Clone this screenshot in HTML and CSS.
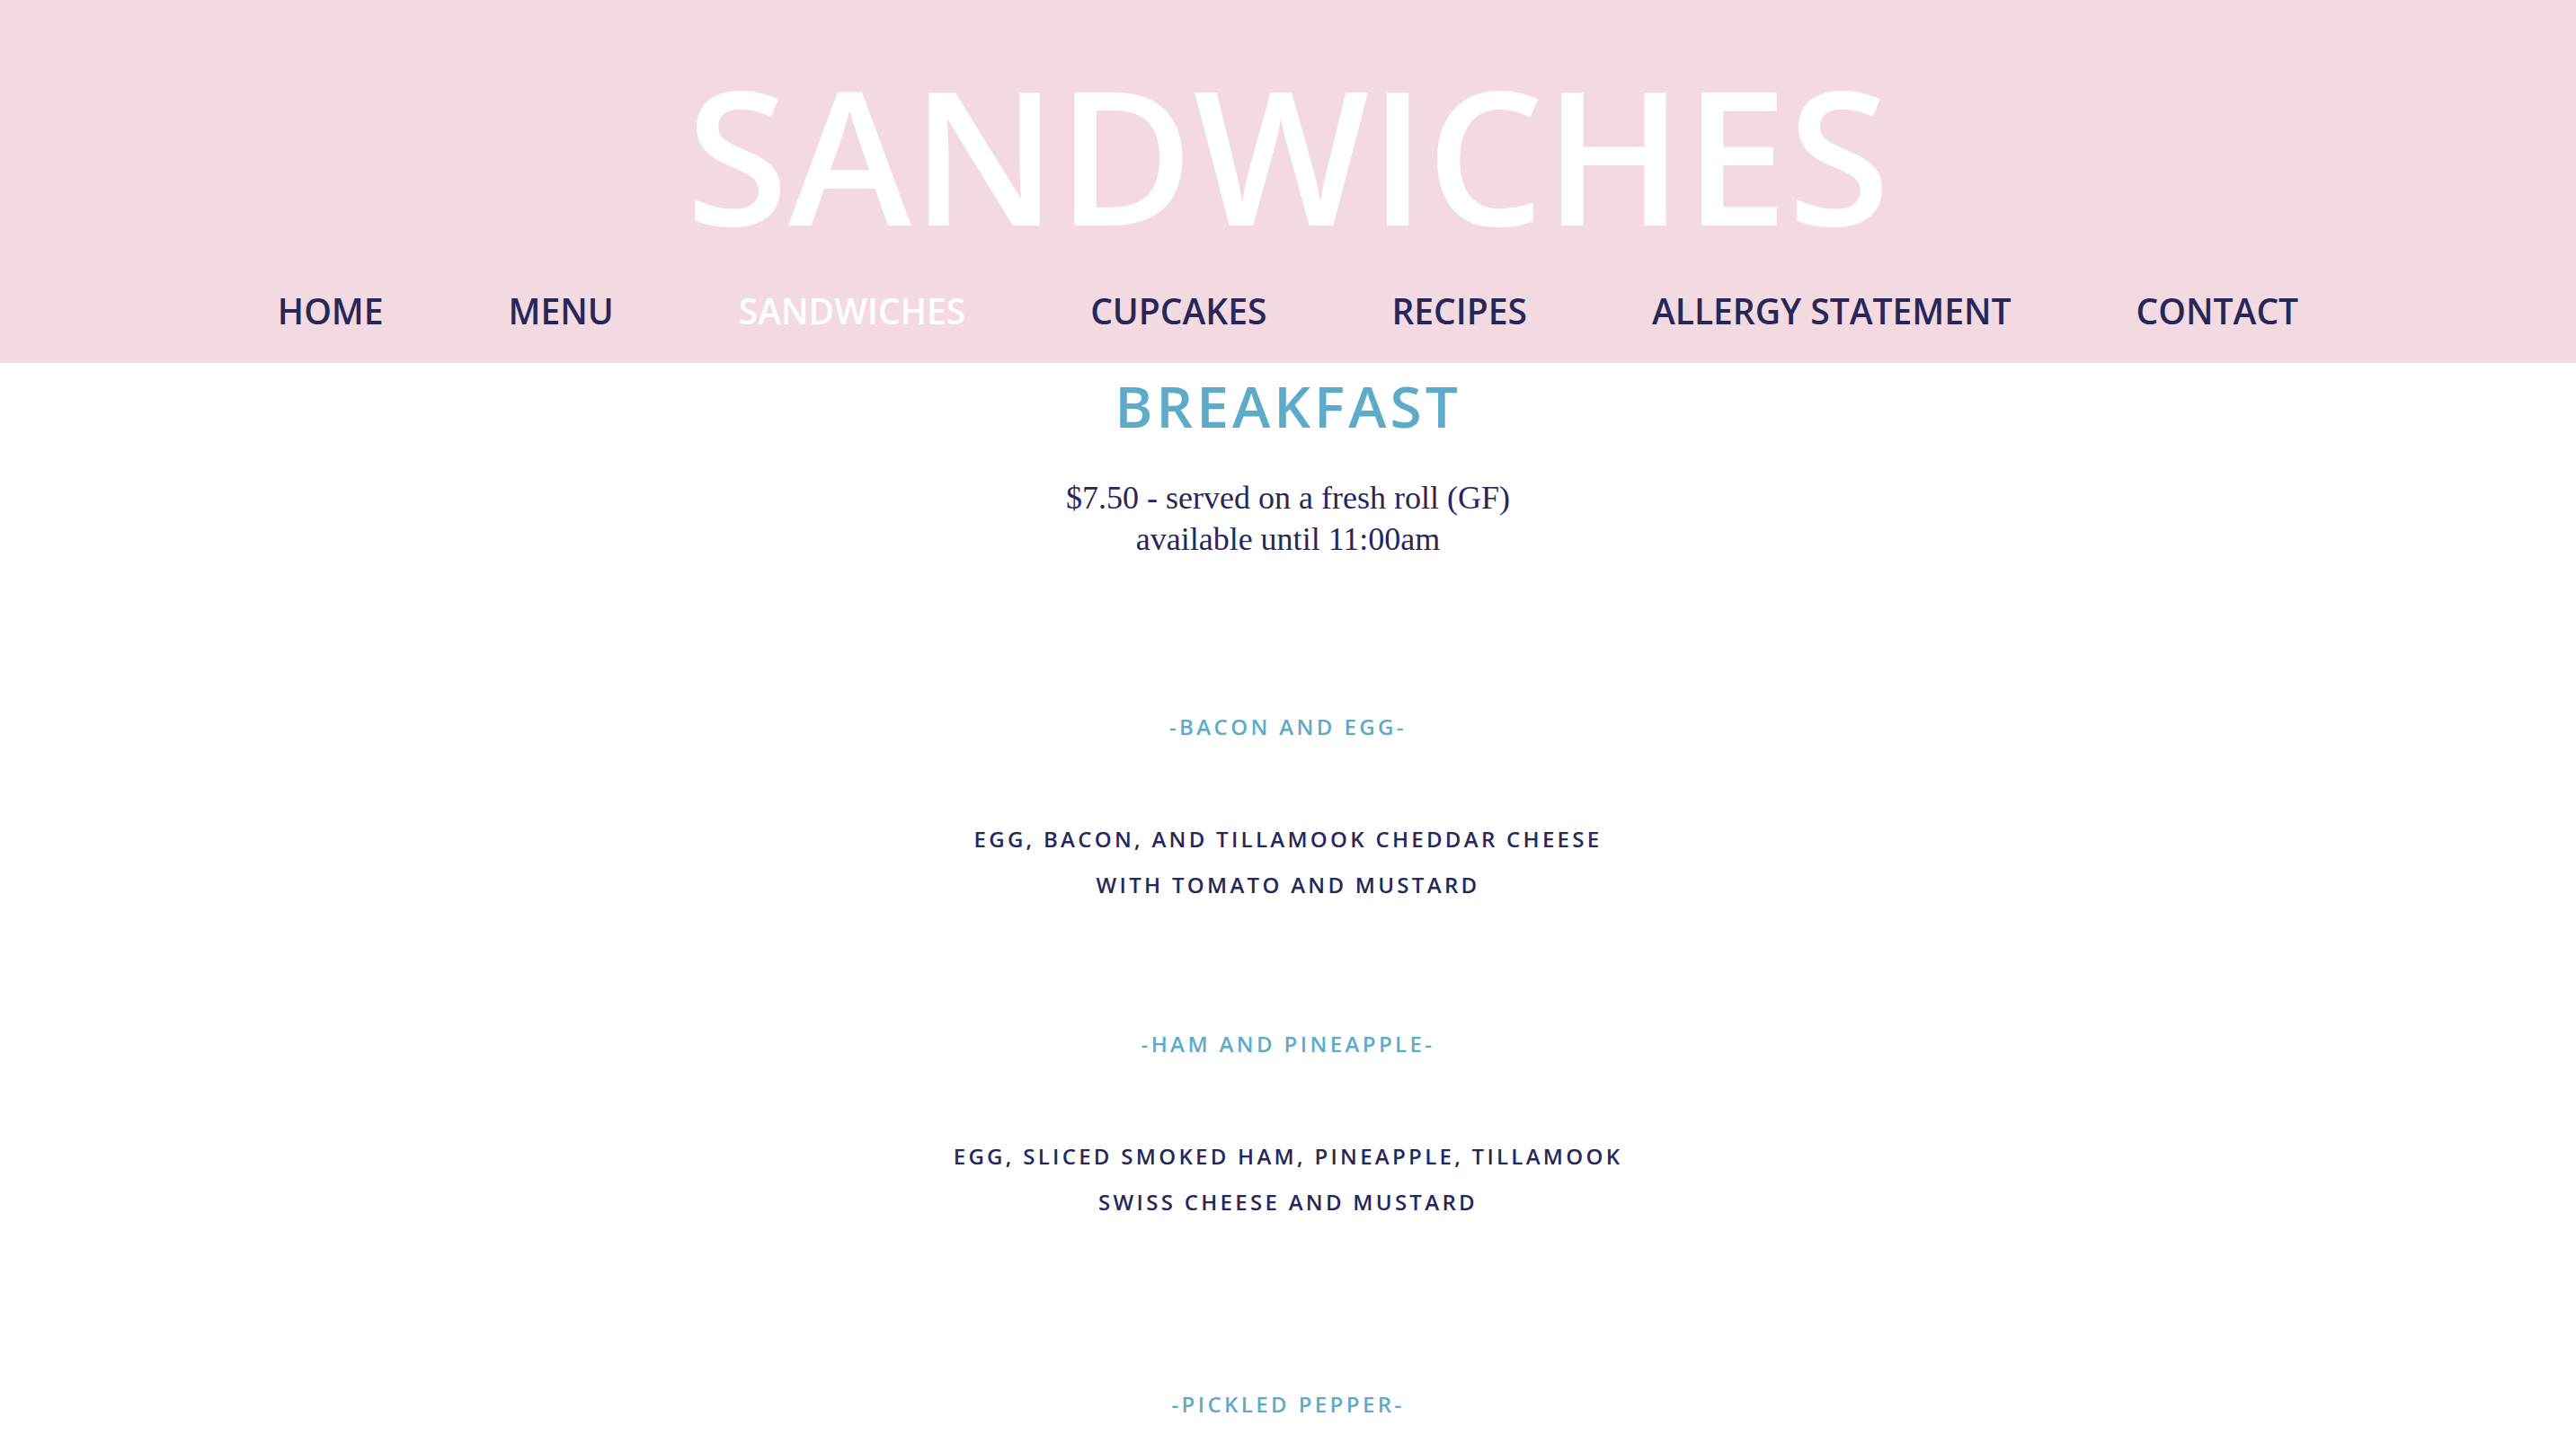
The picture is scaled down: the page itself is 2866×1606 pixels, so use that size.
FILE: index.html
```html
<!DOCTYPE html>
<html lang="en">
<head>
<meta charset="utf-8">
<title>Sandwiches</title>
<link rel="stylesheet" href="styles.css">
</head>
<body>
<header class="site-header">
  <h1 class="site-title">SANDWICHES</h1>
  <nav class="main-nav">
    <a class="nav-link" href="#">HOME</a>
    <a class="nav-link" href="#">MENU</a>
    <a class="nav-link nav-link--active" href="#">SANDWICHES</a>
    <a class="nav-link" href="#">CUPCAKES</a>
    <a class="nav-link" href="#">RECIPES</a>
    <a class="nav-link" href="#">ALLERGY STATEMENT</a>
    <a class="nav-link" href="#">CONTACT</a>
  </nav>
</header>
<main class="content">
  <h2 class="section-title">BREAKFAST</h2>
  <p class="section-note">$7.50 - served on a fresh roll (GF)<br>available until 11:00am</p>

  <section class="item">
    <h3 class="item-name">-BACON AND EGG-</h3>
    <p class="item-desc">EGG, BACON, AND TILLAMOOK CHEDDAR CHEESE<br>WITH TOMATO AND MUSTARD</p>
  </section>

  <section class="item">
    <h3 class="item-name">-HAM AND PINEAPPLE-</h3>
    <p class="item-desc">EGG, SLICED SMOKED HAM, PINEAPPLE, TILLAMOOK<br>SWISS CHEESE AND MUSTARD</p>
  </section>

  <section class="item item--spaced">
    <h3 class="item-name">-PICKLED PEPPER-</h3>
  </section>
</main>
</body>
</html>
```
FILE: styles.css
```css
html, body {
  margin: 0;
  padding: 0;
  background: #ffffff;
}

body {
  font-family: "Open Sans", "Liberation Sans", sans-serif;
  color: #27275a;
}

.site-header {
  background: #f3dae0;
  height: 404px;
  box-sizing: border-box;
  padding-top: 68px;
  display: flex;
  flex-direction: column;
  align-items: center;
}

.site-title {
  margin: 0;
  font-size: 207px;
  line-height: 207px;
  font-weight: 600;
  color: #ffffff;
  letter-spacing: 0;
}

.main-nav {
  margin-top: 51px;
  display: flex;
  justify-content: center;
  gap: 139px;
}

.nav-link {
  font-size: 39px;
  line-height: 39px;
  font-weight: 600;
  letter-spacing: 0;
  color: #27275a;
  text-decoration: none;
}

.nav-link--active {
  color: #ffffff;
}

.content {
  display: flex;
  flex-direction: column;
  align-items: center;
  text-align: center;
}

.section-title {
  margin: 16px 0 0;
  font-size: 64px;
  line-height: 64px;
  font-weight: 600;
  letter-spacing: 4px;
  color: #5eabc9;
}

.section-note {
  margin: 47px 0 0;
  font-family: "Liberation Serif", "Times New Roman", serif;
  font-size: 36px;
  line-height: 46px;
  color: #27275a;
}

.item {
  margin-top: 134px;
  display: flex;
  flex-direction: column;
  align-items: center;
}

.item:first-of-type {
  margin-top: 168px;
}

.item--spaced {
  margin-top: 182px;
}

.item-name {
  margin: 0;
  font-size: 24px;
  line-height: 36px;
  font-weight: 600;
  letter-spacing: 3.4px;
  color: #5eabc9;
}

.item-desc {
  margin: 81px 0 0;
  font-size: 24px;
  line-height: 51px;
  font-weight: 600;
  letter-spacing: 3.3px;
  color: #27275a;
}
```
